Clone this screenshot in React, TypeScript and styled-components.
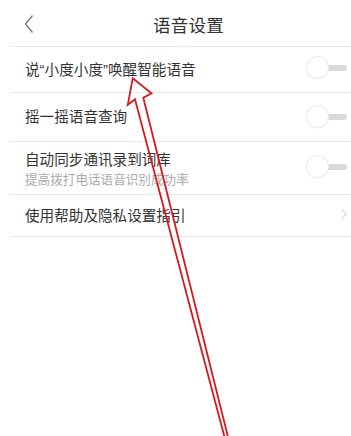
import React from 'react';
import styled, { createGlobalStyle } from 'styled-components';

const GlobalStyle = createGlobalStyle`
  html, body {
    margin: 0;
    padding: 0;
    background: #ffffff;
  }
  body {
    font-family: "Liberation Sans", "Noto Sans CJK SC", sans-serif;
    -webkit-font-smoothing: antialiased;
  }
`;

const Page = styled.div`
  position: relative;
  width: 351px;
  height: 436px;
  overflow: hidden;
  background: #ffffff;
`;

const Header = styled.div`
  height: 46px;
  margin-left: 10px;
  border-bottom: 1px solid #e9e9e9;
  display: flex;
  align-items: center;
  justify-content: center;
  position: relative;
`;

const BackButton = styled.button`
  position: absolute;
  left: 12px;
  top: 13px;
  width: 14px;
  height: 22px;
  padding: 0;
  border: none;
  background: transparent;
  display: flex;
  align-items: center;
  justify-content: center;
`;

const Title = styled.div`
  font-size: 17.5px;
  color: #333333;
  letter-spacing: 0.2px;
  margin-left: 16px;
  margin-top: 2px;
`;

const List = styled.div`
  margin-left: 10px;
  display: flex;
  flex-direction: column;
`;

const Row = styled.div<{ $h: number }>`
  height: ${({ $h }) => $h - 1}px;
  border-bottom: 1px solid #e9e9e9;
  display: flex;
  align-items: center;
  justify-content: space-between;
  padding-left: 15px;
  padding-right: 4px;
`;

const Texts = styled.div<{ $shift?: number }>`
  display: flex;
  flex-direction: column;
  gap: 3px;
  margin-top: ${({ $shift }) => $shift ?? 0}px;
`;

const Label = styled.div`
  font-size: 14.6px;
  color: #333333;
  line-height: 18px;
`;

const Quote = styled.span`
  font-family: "Liberation Sans", sans-serif;
  font-size: 15px;
`;

const Sub = styled.div`
  font-size: 12.6px;
  color: #aaaaaa;
  line-height: 16px;
`;

const Switch = styled.div<{ $shift?: number }>`
  position: relative;
  width: 40px;
  height: 22px;
  margin-top: ${({ $shift }) => $shift ?? 0}px;
`;

const Track = styled.div`
  position: absolute;
  right: 0;
  top: 8px;
  width: 30px;
  height: 6px;
  border-radius: 3px;
  background: #d9d9d9;
`;

const Knob = styled.div`
  position: absolute;
  left: 0;
  top: 0;
  width: 21px;
  height: 21px;
  border-radius: 50%;
  background: #ffffff;
  box-shadow: 0 0 0 1px #ececec, 0 1px 2px rgba(0, 0, 0, 0.08);
`;

const Chevron = styled.div`
  width: 10px;
  height: 14px;
  display: flex;
  align-items: center;
  justify-content: flex-end;
  margin-top: -4px;
`;

const Annotation = styled.svg`
  position: absolute;
  left: 0;
  top: 0;
  pointer-events: none;
`;

const Toggle = ({ shift }: { shift?: number }) => (
  <Switch $shift={shift}>
    <Track />
    <Knob />
  </Switch>
);

const rows = [
  {
    label: (
      <>
        说<Quote>“</Quote>小度小度<Quote>”</Quote>唤醒智能语音
      </>
    ),
    key: 'wake',
    h: 46,
    kind: 'switch',
    shift: -4,
  },
  { label: '摇一摇语音查询', key: 'shake', h: 49, kind: 'switch', shift: -1 },
  {
    label: '自动同步通讯录到词库',
    key: 'sync',
    sub: '提高拨打电话语音识别成功率',
    h: 53,
    kind: 'switch',
    shift: -2,
  },
  { label: '使用帮助及隐私设置指引', key: 'help', h: 42, kind: 'link', shift: 0 },
];

export default function App() {
  return (
    <>
      <GlobalStyle />
      <Page>
        <Header>
          <BackButton>
            <svg width="10" height="20" viewBox="0 0 10 20">
              <path
                d="M8.5 1.5 L1.5 10 L8.5 18.5"
                fill="none"
                stroke="#777"
                strokeWidth="1.3"
              />
            </svg>
          </BackButton>
          <Title>语音设置</Title>
        </Header>
        <List>
          {rows.map((r) => (
            <Row key={r.key} $h={r.h}>
              <Texts $shift={r.sub ? 2 : 0}>
                <Label>{r.label}</Label>
                {r.sub && <Sub>{r.sub}</Sub>}
              </Texts>
              {r.kind === 'switch' ? (
                <Toggle shift={r.shift} />
              ) : (
                <Chevron>
                  <svg width="6" height="12" viewBox="0 0 6 12">
                    <path
                      d="M0.8 0.8 L5 6 L0.8 11.2"
                      fill="none"
                      stroke="#c8c8c8"
                      strokeWidth="1"
                    />
                  </svg>
                </Chevron>
              )}
            </Row>
          ))}
        </List>
        <Annotation width="351" height="436" viewBox="0 0 351 436">
          <polygon
            points="132.7,78.3 151.5,93.3 143.3,97.7 228,437 224.5,437 135,99.3 127.8,104.8"
            fill="none"
            stroke="#d7191f"
            strokeWidth="1.8"
            strokeLinejoin="miter"
          />
        </Annotation>
      </Page>
    </>
  );
}
